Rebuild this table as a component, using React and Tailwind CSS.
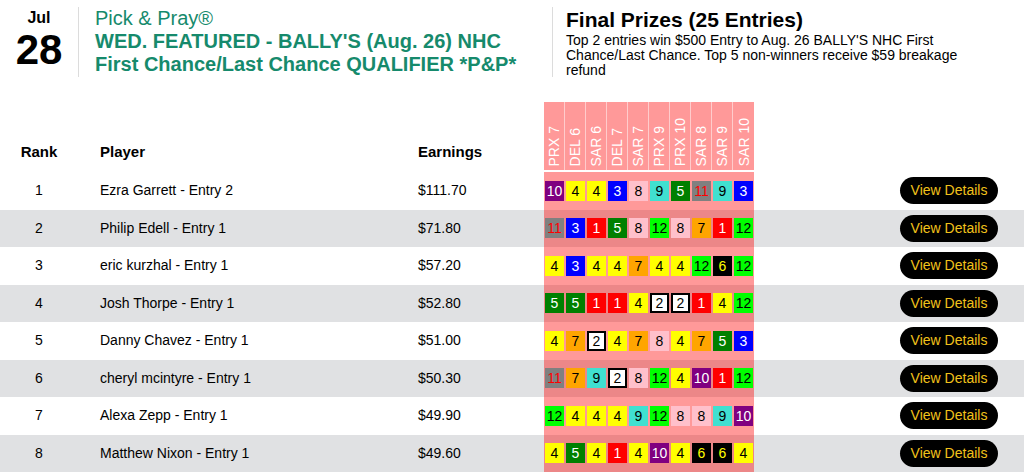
const RACES = ["PRX 7", "DEL 6", "SAR 6", "DEL 7", "SAR 7", "PRX 9", "PRX 10", "SAR 8", "SAR 9", "SAR 10"];

const ROWS = [
  { rank: 1, player: "Ezra Garrett - Entry 2", earnings: "$111.70", picks: [10, 4, 4, 3, 8, 9, 5, 11, 9, 3] },
  { rank: 2, player: "Philip Edell - Entry 1", earnings: "$71.80", picks: [11, 3, 1, 5, 8, 12, 8, 7, 1, 12] },
  { rank: 3, player: "eric kurzhal - Entry 1", earnings: "$57.20", picks: [4, 3, 4, 4, 7, 4, 4, 12, 6, 12] },
  { rank: 4, player: "Josh Thorpe - Entry 1", earnings: "$52.80", picks: [5, 5, 1, 1, 4, 2, 2, 1, 4, 12] },
  { rank: 5, player: "Danny Chavez - Entry 1", earnings: "$51.00", picks: [4, 7, 2, 4, 7, 8, 4, 7, 5, 3] },
  { rank: 6, player: "cheryl mcintyre - Entry 1", earnings: "$50.30", picks: [11, 7, 9, 2, 8, 12, 4, 10, 1, 12] },
  { rank: 7, player: "Alexa Zepp - Entry 1", earnings: "$49.90", picks: [12, 4, 4, 4, 9, 12, 8, 8, 9, 10] },
  { rank: 8, player: "Matthew Nixon - Entry 1", earnings: "$49.60", picks: [4, 5, 4, 1, 4, 10, 4, 6, 6, 4] },
];

// saddle cloth colours
const CLOTH = {
  1: "bg-[#ff0000] text-white",
  2: "bg-white text-black border-2 border-black",
  3: "bg-[#0000ff] text-white",
  4: "bg-[#ffff00] text-black",
  5: "bg-[#008000] text-white",
  6: "bg-black text-[#ffff00]",
  7: "bg-[#ffa500] text-black",
  8: "bg-[#ffc0cb] text-black",
  9: "bg-[#40e0d0] text-black",
  10: "bg-[#800080] text-white",
  11: "bg-[#808080] text-[#ff0000]",
  12: "bg-[#00ff00] text-black",
};

const Cloth = ({ n }) => (
  <div className="w-[21px] flex justify-center">
    <div className={`w-[19px] h-[20px] flex items-center justify-center text-[14px] leading-none ${CLOTH[n]}`}>{n}</div>
  </div>
);

const Row = ({ row, striped }) => (
  <div className={`flex items-center h-[37.5px] text-[14px] text-black ${striped ? "bg-[#e0e1e3]" : "bg-white"}`}>
    <div className="w-[78px] text-center">{row.rank}</div>
    <div className="w-[340px] pl-[22px]">{row.player}</div>
    <div className="w-[126px]">{row.earnings}</div>
    <div className="w-[210px] h-full flex items-center bg-[rgba(255,0,0,0.4)]">
      {row.picks.map((p, i) => (
        <Cloth key={i} n={p} />
      ))}
    </div>
    <div className="flex-1 flex justify-end pr-[26px]">
      <button className="h-[27px] w-[98px] rounded-full bg-black text-[#f2c21b] text-[14px]">View Details</button>
    </div>
  </div>
);

export default function App() {
  return (
    <div className="w-[1024px] h-[472px] overflow-hidden bg-white font-['Liberation_Sans',Arial,sans-serif]">
      {/* Event header */}
      <div className="flex h-[102px] pt-[7px]">
        <div className="w-[78px] flex flex-col items-center pt-[2px] text-black font-bold">
          <div className="text-[16px] leading-[18px]">Jul</div>
          <div className="text-[42px] leading-[42px] mt-[2px]">28</div>
        </div>
        <div className="w-px h-[70px] bg-[#dcdcdc]" />
        <div className="w-[473px] pl-[16px] text-[#168a6c] text-[20px] leading-[23px]">
          <div>Pick &amp; Pray®</div>
          <div className="font-bold">WED. FEATURED - BALLY'S (Aug. 26) NHC</div>
          <div className="font-bold">First Chance/Last Chance QUALIFIER *P&amp;P*</div>
        </div>
        <div className="w-px h-[70px] bg-[#dcdcdc]" />
        <div className="pl-[13px] pt-[1px] w-[440px] text-black">
          <div className="text-[21px] leading-[23px] font-bold">Final Prizes (25 Entries)</div>
          <div className="text-[14px] leading-[15px] mt-[2px]">
            Top 2 entries win $500 Entry to Aug. 26 BALLY'S NHC First Chance/Last Chance. Top 5 non-winners receive $59 breakage refund
          </div>
        </div>
      </div>

      {/* Table header */}
      <div className="flex items-end h-[68px] text-[15px] font-bold text-black">
        <div className="w-[78px] text-center pb-[7px]">Rank</div>
        <div className="w-[340px] pl-[22px] pb-[7px]">Player</div>
        <div className="w-[126px] pb-[7px]">Earnings</div>
        <div className="w-[210px] h-full flex">
          {RACES.map((r, i) => (
            <div
              key={r}
              className={`w-[21px] h-full bg-[rgba(255,0,0,0.4)] flex items-end justify-center pb-[4px] ${i < RACES.length - 1 ? "border-r border-white/50" : ""}`}
            >
              <span className="[writing-mode:vertical-rl] rotate-180 text-white text-[14px] font-normal leading-none whitespace-nowrap">{r}</span>
            </div>
          ))}
        </div>
      </div>
      <div className="h-[2px]" />

      {ROWS.map((row, i) => (
        <Row key={row.rank} row={row} striped={i % 2 === 1} />
      ))}
    </div>
  );
}
